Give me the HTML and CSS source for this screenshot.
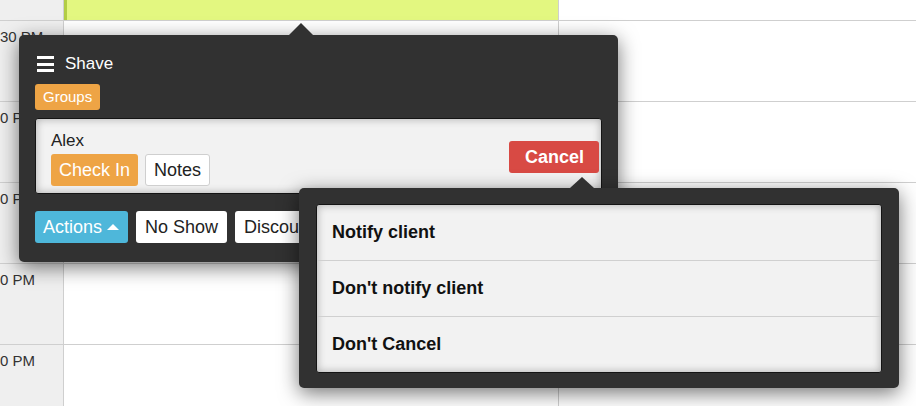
FILE: index.html
```html
<!DOCTYPE html>
<html>
<head>
<meta charset="utf-8">
<link rel="stylesheet" href="styles.css">
</head>
<body>
<div class="cal">
  <div class="col times">
    <div class="cell cell-top"></div>
    <div class="cell"><span class="tlabel">30 PM</span></div>
    <div class="cell"><span class="tlabel">0 PM</span></div>
    <div class="cell"><span class="tlabel">0 PM</span></div>
    <div class="cell"><span class="tlabel">0 PM</span></div>
    <div class="cell"><span class="tlabel">0 PM</span></div>
  </div>
  <div class="col main">
    <div class="cell cell-top"><div class="event"></div></div>
    <div class="cell"></div>
    <div class="cell"></div>
    <div class="cell"></div>
    <div class="cell"></div>
    <div class="cell"></div>
  </div>
  <div class="col side">
    <div class="cell cell-top"></div>
    <div class="cell"></div>
    <div class="cell"></div>
    <div class="cell"></div>
    <div class="cell"></div>
    <div class="cell"></div>
  </div>
</div>

<div class="popover pop-appt">
  <div class="pop-title">
    <span class="burger"><i></i><i></i><i></i></span>
    <span class="title-text">Shave</span>
  </div>
  <div class="tag-row"><span class="tag">Groups</span></div>
  <div class="panel client">
    <div class="client-info">
      <div class="client-name">Alex</div>
      <div class="btn-row">
        <span class="btn btn-orange">Check In</span>
        <span class="btn btn-outline">Notes</span>
      </div>
    </div>
    <span class="btn btn-red">Cancel</span>
  </div>
  <div class="actions-row">
    <span class="btn btn-blue">Actions<span class="caret"></span></span>
    <span class="btn btn-white">No Show</span>
    <span class="btn btn-white">Discount</span>
  </div>
</div>

<div class="popover pop-cancel">
  <div class="panel menu">
    <div class="menu-item">Notify client</div>
    <div class="menu-item">Don't notify client</div>
    <div class="menu-item">Don't Cancel</div>
  </div>
</div>
</body>
</html>
```

FILE: styles.css
```css
* { box-sizing: border-box; }
html, body {
  margin: 0;
  padding: 0;
  width: 916px;
  height: 406px;
  overflow: hidden;
  background: #fff;
  font-family: "Liberation Sans", Arial, sans-serif;
  color: #333;
}

.cal {
  display: flex;
  height: 406px;
}
.col {
  display: flex;
  flex-direction: column;
  border-right: 1px solid #cfcfcf;
}
.times { width: 64px; background: #efefef; }
.main { width: 495px; }
.side { flex: 1; border-right: none; }

.cell {
  height: 81px;
  flex: none;
  border-bottom: 1px solid #cfcfcf;
}
.cell-top { height: 21px; }

.tlabel {
  display: block;
  padding-top: 7px;
  font-size: 15px;
  line-height: 17px;
  color: #333;
  white-space: nowrap;
}

.event {
  height: 20px;
  background: #e3f780;
  border-left: 3px solid #b2cd45;
}

/* popovers */
.popover {
  position: absolute;
  background: #313131;
  border-radius: 5px;
  box-shadow: 0 5px 20px rgba(0, 0, 0, 0.55);
}
.popover::before {
  content: "";
  position: absolute;
  top: -12px;
  left: 270px;
  border-left: 12px solid transparent;
  border-right: 12px solid transparent;
  border-bottom: 12px solid #313131;
}

.pop-appt {
  left: 19px;
  top: 35px;
  width: 599px;
  height: 227px;
  padding: 19px 16px 0 16px;
}

.pop-title {
  display: flex;
  align-items: center;
  height: 20px;
}
.burger {
  display: flex;
  flex-direction: column;
  gap: 3.5px;
  width: 17px;
  margin-left: 2px;
  margin-right: 11px;
}
.burger i {
  display: block;
  height: 3px;
  background: #fff;
}
.title-text {
  font-size: 17px;
  line-height: 20px;
  color: #fff;
}

.tag-row { margin-top: 10px; display: flex; }
.tag {
  display: inline-block;
  height: 26px;
  line-height: 26px;
  padding: 0 8px;
  font-size: 15px;
  color: #fff;
  background: #eea445;
  border-radius: 3px;
}

.panel {
  background: #f2f2f2;
  border: 1px solid #141414;
  border-radius: 3px;
  box-shadow: inset 0 0 8px rgba(0, 0, 0, 0.3);
}

.client {
  margin-top: 8px;
  height: 76px;
  padding: 12px 2px 7px 15px;
  display: flex;
  align-items: center;
  justify-content: space-between;
}
.client-info { display: flex; flex-direction: column; }
.client-name {
  font-size: 17px;
  line-height: 20px;
  color: #222;
}
.btn-row {
  display: flex;
  gap: 7px;
  margin-top: 3px;
}

.btn {
  display: inline-flex;
  align-items: center;
  height: 32px;
  line-height: 32px;
  padding: 0 8px;
  font-size: 18px;
  border-radius: 3px;
  white-space: nowrap;
}
.btn-orange { background: #eea445; color: #fff; }
.btn-outline {
  background: #fff;
  color: #222;
  border: 1px solid #cfcfcf;
  line-height: 30px;
}
.btn-red {
  background: #d84a44;
  color: #fff;
  font-weight: bold;
  padding: 0 15px 0 16px;
  margin-bottom: 3px;
}
.btn-blue { background: #4eb7da; color: #fff; padding: 0 9px 0 8px; }
.btn-white { background: #fff; color: #222; padding: 0 9px; }

.caret {
  display: inline-block;
  margin-left: 5px;
  width: 0;
  height: 0;
  border-left: 6px solid transparent;
  border-right: 6px solid transparent;
  border-bottom: 6px solid #fff;
}

.actions-row {
  display: flex;
  gap: 8px;
  margin-top: 17px;
}

.pop-cancel {
  left: 299px;
  top: 188px;
  width: 600px;
  height: 200px;
  padding: 16px 17px 15px 17px;
}
.pop-cancel::before { left: 271px; top: -11px; border-bottom-width: 11px; }

.menu {
  height: 169px;
  display: flex;
  flex-direction: column;
  overflow: hidden;
}
.menu-item {
  height: 56px;
  flex: none;
  display: flex;
  align-items: center;
  padding-left: 15px;
  font-size: 18px;
  font-weight: bold;
  color: #111;
  border-bottom: 1px solid #d0d0d0;
}
.menu-item:last-child { border-bottom: none; height: 55px; }
```
